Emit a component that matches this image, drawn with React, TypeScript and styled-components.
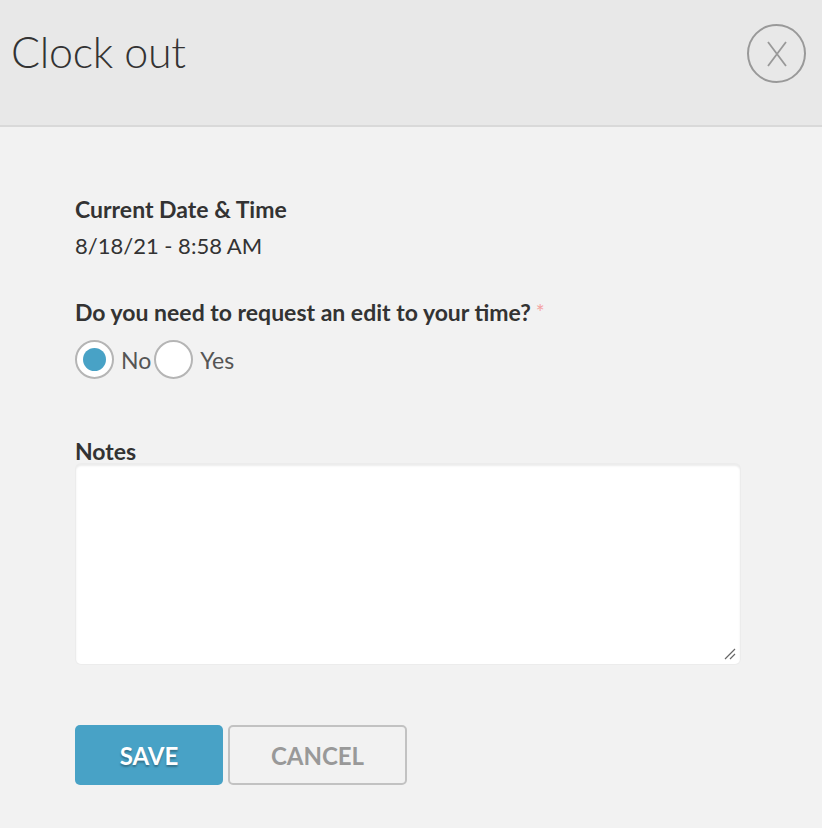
import React from "react";
import styled, { createGlobalStyle } from "styled-components";

const Global = createGlobalStyle`
  html, body { margin: 0; padding: 0; background: #f2f2f2; }
  body { font-family: Lato, "Open Sans", sans-serif; color: #333; }
  * { box-sizing: border-box; }
`;

const Page = styled.div`
  width: 822px;
  height: 828px;
  background: #f2f2f2;
  display: flex;
  flex-direction: column;
`;

const Header = styled.header`
  height: 127px;
  background: #e8e8e8;
  border-bottom: 2px solid #d9d9d9;
  display: flex;
  align-items: flex-start;
  justify-content: space-between;
  padding: 23px 16px 0 11px;
`;

const Title = styled.h1`
  margin: 0;
  font-family: Lato, sans-serif;
  font-weight: 300;
  font-size: 43px;
  line-height: 58px;
  color: #333;
  letter-spacing: -0.3px;
`;

const CloseButton = styled.button`
  width: 59px;
  height: 59px;
  margin-top: 1px;
  border-radius: 50%;
  border: 2px solid #999;
  background: transparent;
  display: flex;
  align-items: center;
  justify-content: center;
  padding: 0;
  cursor: pointer;
`;

const Body = styled.main`
  padding: 68px 0 0 75px;
  display: flex;
  flex-direction: column;
`;

const Label = styled.div<{ $mt?: number }>`
  font-weight: 700;
  font-size: 23px;
  line-height: 28px;
  color: #333;
  margin-top: ${(p) => p.$mt ?? 0}px;
`;

const NotesLabel = styled(Label)`
  line-height: 26px;
`;

const Value = styled.div`
  font-size: 22px;
  line-height: 28px;
  color: #333;
  margin-top: 9px;
`;

const Req = styled.span`
  color: #f4a3a3;
  font-weight: 400;
  font-size: 21px;
  line-height: 28px;
  vertical-align: top;
  margin-left: 5px;
`;

const RadioRow = styled.div`
  display: flex;
  align-items: center;
  margin-top: 14px;
`;

const RadioOption = styled.label`
  display: flex;
  align-items: center;
  gap: 7px;
  font-size: 23px;
  color: #555;
  margin-right: 3px;
`;

const RadioCircle = styled.span<{ $checked?: boolean }>`
  width: 39px;
  height: 39px;
  border-radius: 50%;
  border: 2px solid #b5b5b5;
  background: #fff;
  display: flex;
  align-items: center;
  justify-content: center;
  &::after {
    content: "";
    width: 23px;
    height: 23px;
    border-radius: 50%;
    background: ${(p) => (p.$checked ? "#48a2c6" : "transparent")};
  }
`;

const Notes = styled.div`
  position: relative;
  width: 664px;
  height: 200px;
  margin-left: 1px;
  background: #fff;
  border-radius: 5px;
  box-shadow: inset 0 2px 2px rgba(0, 0, 0, 0.08), 0 0 0 1px #ececec;
`;

const Grip = styled.svg`
  position: absolute;
  right: 4px;
  bottom: 4px;
`;

const Buttons = styled.div`
  display: flex;
  gap: 5px;
  margin-top: 61px;
`;

const SaveButton = styled.button`
  width: 148px;
  height: 60px;
  border: none;
  border-radius: 5px;
  background: #48a2c6;
  color: #fff;
  font-family: Lato, sans-serif;
  font-weight: 700;
  font-size: 24px;
  text-shadow: 0 2px 2px rgba(0, 0, 0, 0.3);
`;

const CancelButton = styled.button`
  width: 179px;
  height: 60px;
  border: 2px solid #c2c2c2;
  border-radius: 5px;
  background: #f2f2f2;
  color: #999;
  font-family: Lato, sans-serif;
  font-weight: 700;
  font-size: 24px;
`;

export default function App() {
  return (
    <Page>
      <Global />
      <Header>
        <Title>Clock out</Title>
        <CloseButton aria-label="close">
          <svg width="24" height="28" viewBox="0 0 24 28">
            <path d="M3 2 L21 26 M21 2 L3 26" stroke="#999" strokeWidth="1.8" fill="none" />
          </svg>
        </CloseButton>
      </Header>
      <Body>
        <Label>Current Date &amp; Time</Label>
        <Value>8/18/21 - 8:58 AM</Value>
        <Label $mt={38}>
          Do you need to request an edit to your time?<Req>*</Req>
        </Label>
        <RadioRow>
          <RadioOption>
            <RadioCircle $checked />
            No
          </RadioOption>
          <RadioOption>
            <RadioCircle />
            Yes
          </RadioOption>
        </RadioRow>
        <NotesLabel $mt={59}>Notes</NotesLabel>
        <Notes>
          <Grip width="12" height="12" viewBox="0 0 12 12">
            <path d="M1 11 L11 1 M6 11 L11 6" stroke="#666" strokeWidth="1.2" />
          </Grip>
        </Notes>
        <Buttons>
          <SaveButton>SAVE</SaveButton>
          <CancelButton>CANCEL</CancelButton>
        </Buttons>
      </Body>
    </Page>
  );
}
